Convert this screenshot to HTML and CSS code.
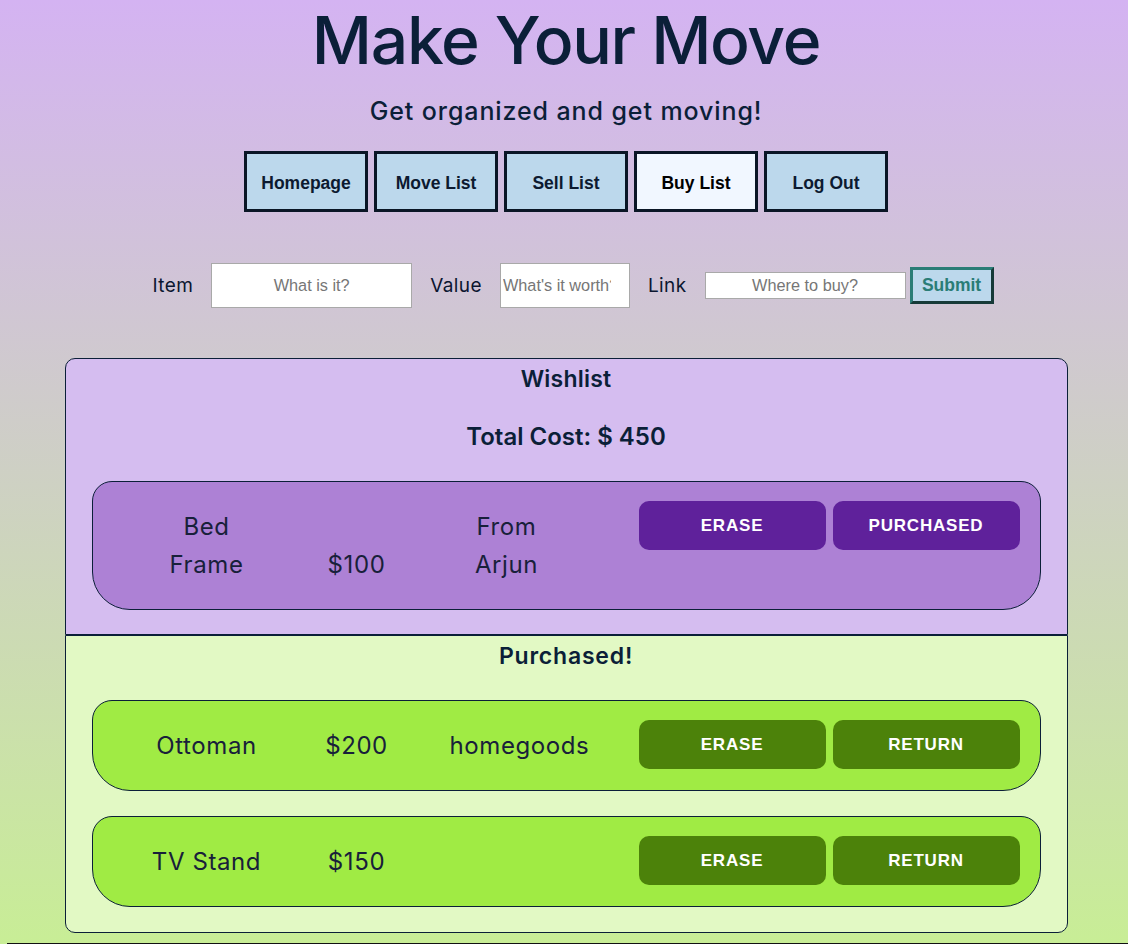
FILE: index.html
```html
<!DOCTYPE html>
<html lang="en">
<head>
<meta charset="utf-8">
<title>Make Your Move</title>
<link rel="stylesheet" href="styles.css">
</head>
<body>
<header class="hero">
  <h1 class="title">Make Your Move</h1>
  <p class="tagline">Get organized and get moving!</p>
  <nav class="nav">
    <a class="nav-btn" href="#">Homepage</a>
    <a class="nav-btn" href="#">Move List</a>
    <a class="nav-btn" href="#">Sell List</a>
    <a class="nav-btn nav-btn-active" href="#">Buy List</a>
    <a class="nav-btn" href="#">Log Out</a>
  </nav>
</header>

<form class="add-form">
  <label class="field-label" for="item">Item</label>
  <input class="field field-wide field-tall center" id="item" type="text" placeholder="What is it?">
  <label class="field-label" for="value">Value</label>
  <input class="field field-narrow field-tall" id="value" type="text" placeholder="What's it worth?">
  <label class="field-label" for="link">Link</label>
  <input class="field field-wide center" id="link" type="text" placeholder="Where to buy?">
  <button class="submit-btn" type="button">Submit</button>
</form>

<main class="lists">
  <section class="list list-wish">
    <h2 class="list-title">Wishlist</h2>
    <h3 class="list-total">Total Cost: $ 450</h3>
    <div class="card card-wish">
      <div class="cell">Bed Frame</div>
      <div class="cell">$100</div>
      <div class="cell">From Arjun</div>
      <div class="actions">
        <button class="act act-wish" type="button">Erase</button>
        <button class="act act-wish" type="button">Purchased</button>
      </div>
    </div>
  </section>

  <section class="list list-bought">
    <h2 class="list-title list-title-bought">Purchased!</h2>
    <div class="card card-bought">
      <div class="cell">Ottoman</div>
      <div class="cell">$200</div>
      <div class="cell">homegoods</div>
      <div class="actions">
        <button class="act act-bought" type="button">Erase</button>
        <button class="act act-bought" type="button">Return</button>
      </div>
    </div>
    <div class="card card-bought">
      <div class="cell">TV Stand</div>
      <div class="cell">$150</div>
      <div class="cell"></div>
      <div class="actions">
        <button class="act act-bought" type="button">Erase</button>
        <button class="act act-bought" type="button">Return</button>
      </div>
    </div>
  </section>
</main>
<footer class="footer"></footer>
</body>
</html>
```

FILE: styles.css
```css
html {
  min-height: 100%;
  background: linear-gradient(180deg, #d4b3f2 0%, #c8ee95 100%);
}

body {
  margin: 0;
  padding: 0 0 0 4px;
  min-height: 944px;
  font-family: "Inter", "Noto Sans", sans-serif;
  color: #0b1f38;
  display: flex;
  flex-direction: column;
  align-items: center;
}

.hero {
  display: flex;
  flex-direction: column;
  align-items: center;
}

.title {
  margin: 2px 0 0;
  font-size: 66px;
  line-height: 76px;
  font-weight: 500;
  letter-spacing: -1.3px;
  color: #0b1f38;
}

.tagline {
  margin: 18px 0 0;
  font-size: 25px;
  line-height: 30px;
  font-weight: 500;
  letter-spacing: 0.9px;
}

.nav {
  display: flex;
  gap: 6px;
  margin-top: 25px;
}

.nav-btn {
  box-sizing: border-box;
  width: 124px;
  height: 61px;
  display: flex;
  align-items: center;
  justify-content: center;
  border: 3px solid #0a1626;
  background: #bcd8ec;
  color: #0c1a30;
  font-family: "Liberation Sans", Arial, sans-serif;
  font-weight: bold;
  font-size: 17.5px;
  text-decoration: none;
  padding-top: 3px;
}

.nav-btn-active {
  background: #f1f7ff;
  color: #000;
}

.add-form {
  display: flex;
  align-items: center;
  margin-top: 51px;
  margin-left: 14px;
}

.field-label {
  font-size: 19px;
  margin: 0 18px 0 0;
  color: #0b1630;
  letter-spacing: 0.4px;
}

.field {
  box-sizing: border-box;
  height: 27px;
  border: 1px solid #a9a9a9;
  background: #fff;
  font-family: "Liberation Sans", Arial, sans-serif;
  font-size: 16.3px;
  padding: 0 2px;
  margin-right: 18px;
}

.field::placeholder {
  color: #767676;
}

.field-tall {
  height: 45px;
}

.field-wide {
  width: 201px;
}

.field-narrow {
  width: 130px;
  padding-right: 18px;
}

.center {
  text-align: center;
}

#link {
  margin-right: 4px;
}

.submit-btn {
  box-sizing: border-box;
  width: 84px;
  height: 37px;
  background: #bcd8ec;
  border: 3px solid;
  border-color: #2a7d76 #163a38 #163a38 #2a7d76;
  color: #2a7d76;
  font-family: "Liberation Sans", Arial, sans-serif;
  font-weight: bold;
  font-size: 17.5px;
  padding: 0;
}

.lists {
  margin-top: 50px;
  width: 1003px;
  display: flex;
  flex-direction: column;
}

.list {
  border: 1px solid #0b1f38;
  padding: 0 26px 25px;
  display: flex;
  flex-direction: column;
}

.list-wish {
  background: #d5bdf0;
  border-radius: 10px 10px 0 0;
  padding-bottom: 24px;
}

.list-bought {
  background: #e2f9c4;
  border-radius: 0 0 10px 10px;
}

.list-title {
  margin: 5px 0 0;
  text-align: center;
  font-size: 23px;
  line-height: 30px;
  font-weight: 600;
  letter-spacing: 0.2px;
}

.list-title-bought {
  margin-bottom: 29px;
  letter-spacing: 0.8px;
}

.list-total {
  margin: 28px 0 29px;
  text-align: center;
  font-size: 24px;
  line-height: 30px;
  font-weight: 600;
  letter-spacing: 0;
}

.card {
  display: flex;
  align-items: flex-end;
  border: 1px solid #0b1f38;
  border-radius: 20px 20px 38px 38px;
  padding: 19px 20px 21px 39px;
}

.card + .card {
  margin-top: 25px;
}

.card-wish {
  background: #ad81d5;
}

.card-bought {
  background: #a0eb44;
}

.cell {
  box-sizing: border-box;
  width: 150px;
  flex: none;
  padding: 7px 18px 4px;
  text-align: center;
  font-size: 24px;
  line-height: 38px;
  letter-spacing: 0.6px;
  color: #18203a;
}

.actions {
  margin-left: auto;
  align-self: flex-start;
  display: flex;
  gap: 7px;
}

.act {
  width: 187px;
  height: 49px;
  border: none;
  border-radius: 10px;
  color: #fff;
  font-family: "Liberation Sans", Arial, sans-serif;
  font-weight: bold;
  font-size: 17px;
  letter-spacing: 0.8px;
  text-transform: uppercase;
  padding: 0;
}

.act-wish {
  background: #5f219b;
}

.act-bought {
  background: #4c820a;
}

.footer {
  align-self: stretch;
  margin: 10px 0 0 3px;
  border-top: 1px solid #111;
  height: 10px;
}
```
